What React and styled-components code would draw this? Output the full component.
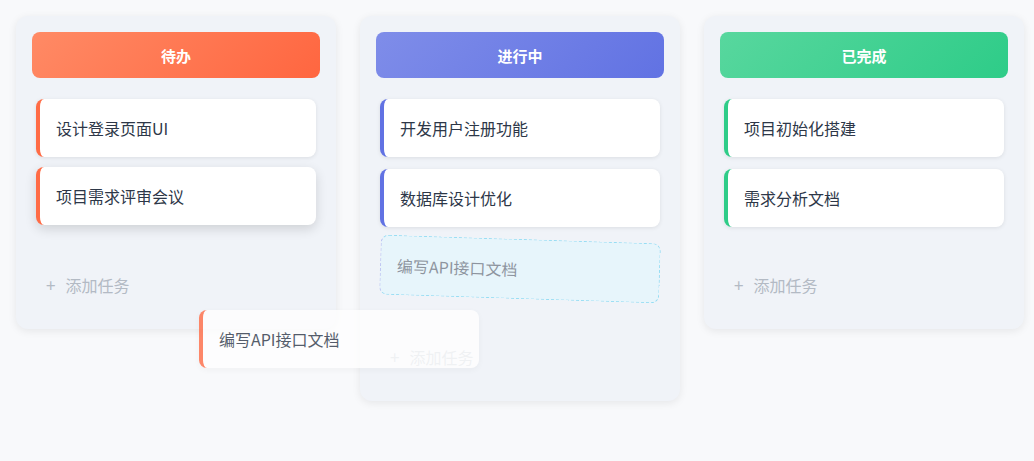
import React from "react";
import styled, { createGlobalStyle, css } from "styled-components";

const GlobalStyle = createGlobalStyle`
  html, body {
    margin: 0;
    padding: 0;
    background: #f8f9fb;
    font-family: "Noto Sans CJK SC", "Noto Sans", sans-serif;
  }
  * { box-sizing: border-box; }
`;

const themes = {
  todo: {
    from: "#ff8a65",
    to: "#ff6640",
    accent: "#ff6b45",
  },
  doing: {
    from: "#7f8de9",
    to: "#6172e3",
    accent: "#6172e3",
  },
  done: {
    from: "#58d79e",
    to: "#2ecc88",
    accent: "#2ecc88",
  },
};

const Board = styled.div`
  position: relative;
  display: flex;
  align-items: flex-start;
  gap: 24px;
  padding: 16px;
  min-height: 461px;
`;

const Column = styled.section`
  width: 320px;
  flex: 0 0 320px;
  display: flex;
  flex-direction: column;
  padding: 16px;
  background: #f0f3f8;
  border-radius: 12px;
  box-shadow: 0 2px 8px rgba(0, 0, 0, 0.08);
`;

const Header = styled.div`
  height: 46px;
  margin-bottom: 17px;
  display: flex;
  align-items: center;
  justify-content: center;
  border-radius: 8px;
  background: linear-gradient(135deg, ${(p) => p.$from}, ${(p) => p.$to});
  color: #ffffff;
  font-size: 15px;
  font-weight: 700;
  line-height: 1;
`;

const List = styled.div`
  display: flex;
  flex-direction: column;
  gap: 12px;
  padding: 4px;
`;

const Card = styled.div`
  height: 58px;
  display: flex;
  align-items: center;
  padding: 0 16px;
  background: #ffffff;
  border-left: 4px solid ${(p) => p.$accent};
  border-radius: 8px;
  box-shadow: 0 1px 4px rgba(0, 0, 0, 0.09);
  color: #2d3748;
  font-size: 16px;
  line-height: 22px;
  ${(p) =>
    p.$hover &&
    css`
      transform: translateY(-2px);
      box-shadow: 0 4px 12px rgba(0, 0, 0, 0.14);
    `}
`;

const Placeholder = styled.div`
  height: 60px;
  display: flex;
  align-items: center;
  padding: 0 16px;
  background: #dff7ff;
  border: 1.5px dashed #3fc8f0;
  border-left-color: #8a96ee;
  border-radius: 8px;
  color: #2d3748;
  font-size: 16px;
  line-height: 22px;
  opacity: 0.5;
  transform: rotate(1.8deg);
`;

const AddButton = styled.button`
  margin-top: 29px;
  display: flex;
  align-items: center;
  padding: 14px 14px 17px;
  border: none;
  background: transparent;
  color: #b3bac4;
  font-family: inherit;
  font-size: 16px;
  line-height: 22px;
  text-align: left;
  cursor: pointer;
`;

const Plus = styled.span`
  margin-right: 10px;
  font-size: 17px;
`;

const Ghost = styled.div`
  position: absolute;
  left: 199px;
  top: 310px;
  width: 280px;
  height: 58px;
  display: flex;
  align-items: center;
  padding: 0 16px;
  background: #ffffff;
  border-left: 4px solid #ff6b45;
  border-radius: 8px;
  color: #2d3748;
  font-size: 16px;
  line-height: 22px;
  opacity: 0.8;
  box-shadow: 0 2px 6px rgba(0, 0, 0, 0.04);
  pointer-events: none;
`;

const columns = [
  {
    key: "todo",
    title: "待办",
    cards: [
      { text: "设计登录页面UI" },
      { text: "项目需求评审会议", hover: true },
    ],
  },
  {
    key: "doing",
    title: "进行中",
    cards: [{ text: "开发用户注册功能" }, { text: "数据库设计优化" }],
    placeholder: "编写API接口文档",
  },
  {
    key: "done",
    title: "已完成",
    cards: [{ text: "项目初始化搭建" }, { text: "需求分析文档" }],
  },
];

export default function App() {
  return (
    <>
      <GlobalStyle />
      <Board>
        {columns.map((col) => {
          const t = themes[col.key];
          return (
            <Column key={col.key}>
              <Header $from={t.from} $to={t.to}>
                {col.title}
              </Header>
              <List>
                {col.cards.map((c) => (
                  <Card key={c.text} $accent={t.accent} $hover={c.hover}>
                    {c.text}
                  </Card>
                ))}
                {col.placeholder && <Placeholder>{col.placeholder}</Placeholder>}
              </List>
              <AddButton>
                <Plus>+</Plus>添加任务
              </AddButton>
            </Column>
          );
        })}
        <Ghost>编写API接口文档</Ghost>
      </Board>
    </>
  );
}
